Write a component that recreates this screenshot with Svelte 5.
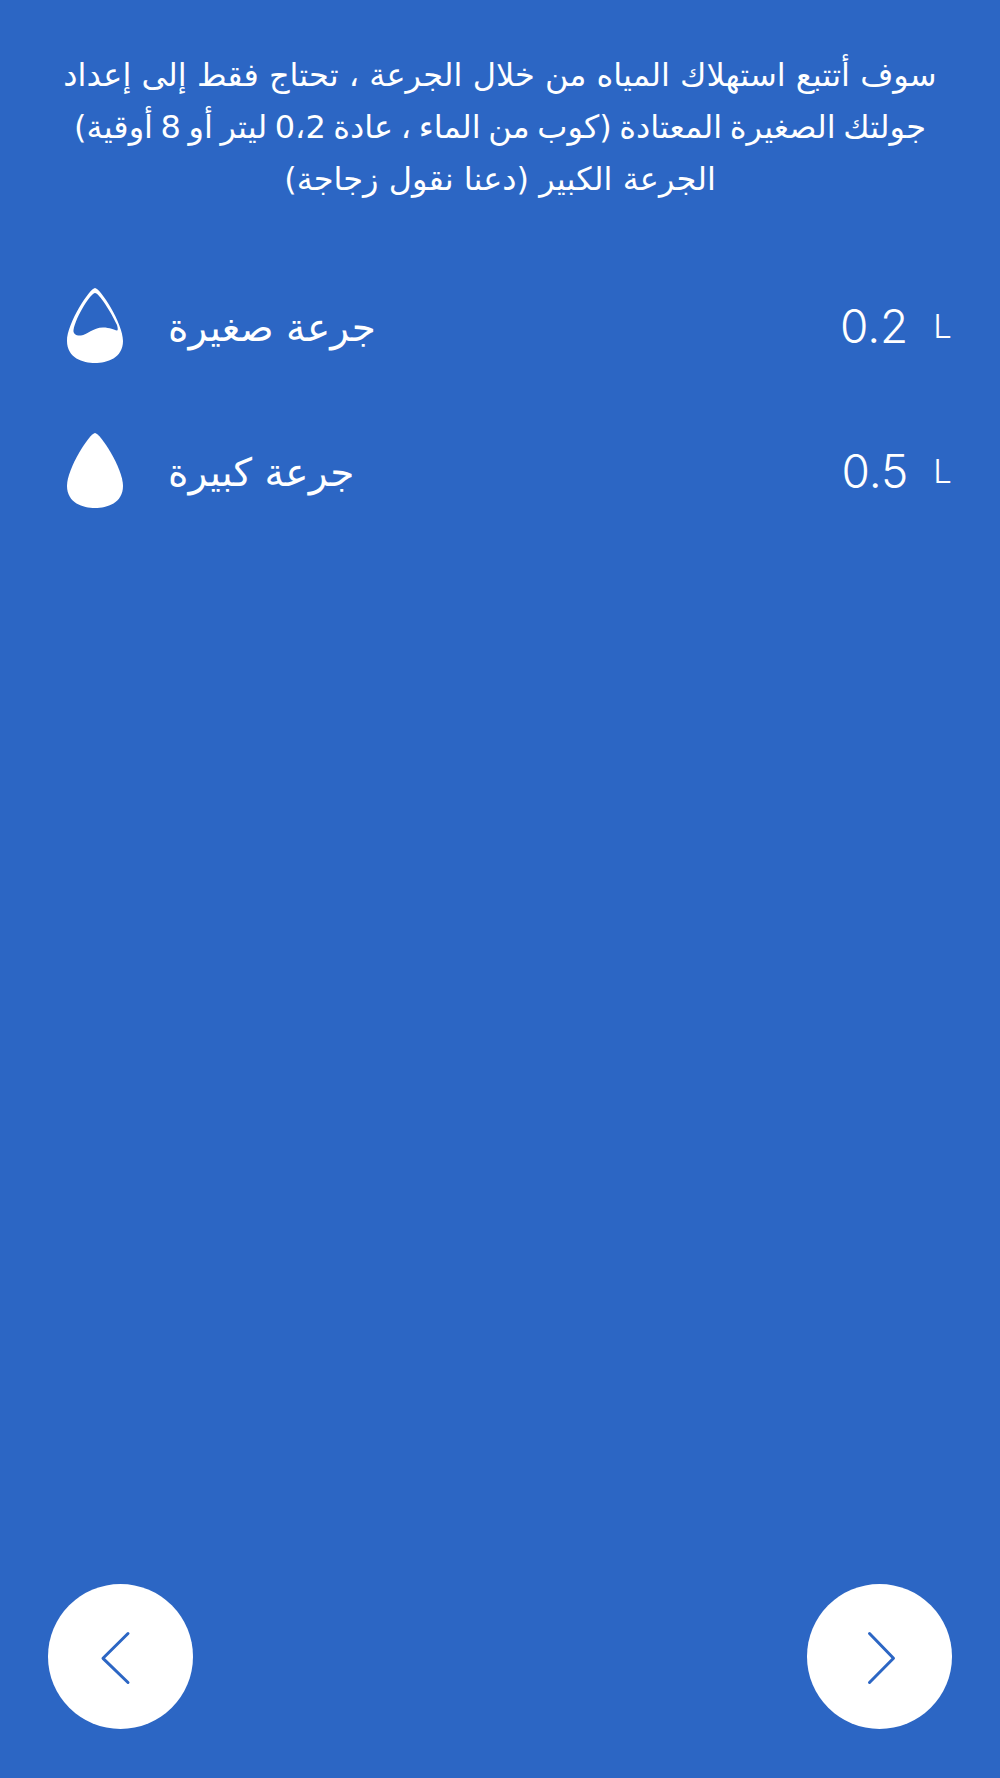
<script>
  const rows = [
    { label: 'جرعة صغيرة', value: '0.2', full: false },
    { label: 'جرعة كبيرة', value: '0.5', full: true }
  ];
  const outer = 'M28 0C33 0 56 35 56 53C56 70 40 75 28 75C16 75 0 70 0 53C0 35 23 0 28 0Z';
  const hollow = 'M28 5C24 5 9 28 6.5 42C6 45.5 9 48 14 47.5C20 47 26 39.5 36 39.5C43 39.5 47 42 50 42.5C51.5 42.7 50.5 38 49.5 36C44 24 32 5 28 5Z';
</script>

<main class="page">
  <p class="intro" lang="ar" dir="rtl">
    سوف أتتبع استهلاك المياه من خلال الجرعة ، تحتاج فقط إلى إعداد<br />
    <span class="tight">جولتك الصغيرة المعتادة (كوب من الماء ، عادة 0،2 ليتر أو 8 أوقية)</span><br />
    الجرعة الكبير (دعنا نقول زجاجة)
  </p>

  <ul class="rows">
    {#each rows as row}
      <li class="row">
        <svg class="drop" viewBox="0 0 56 75" aria-hidden="true">
          <path fill="#fff" fill-rule="evenodd" d={row.full ? outer : outer + hollow} />
        </svg>
        <span class="label" lang="ar" dir="rtl">{row.label}</span>
        <span class="value">{row.value}</span>
        <span class="unit">L</span>
      </li>
    {/each}
  </ul>

  <nav class="nav">
    <button class="round" aria-label="السابق">
      <svg viewBox="0 0 145 145" class="chev"><path d="M80 49.500 55 74.300 80 98.500" /></svg>
    </button>
    <button class="round" aria-label="التالي">
      <svg viewBox="0 0 145 145" class="chev"><path d="M62.500 49.500 86.500 74.300 62.500 98.500" /></svg>
    </button>
  </nav>
</main>

<style>
  :global(body) {
    margin: 0;
    background: #2c66c4;
  }
  .page {
    box-sizing: border-box;
    height: 1778px;
    padding: 49px 48px 49px;
    display: flex;
    flex-direction: column;
    color: #fff;
    font-family: "DejaVu Sans", "Noto Sans", sans-serif;
  }
  .intro {
    margin: 0;
    font-size: 32px;
    line-height: 52px;
    text-align: center;
    white-space: nowrap;
  }
  .tight {
    word-spacing: -2.600px;
  }
  .rows {
    list-style: none;
    margin: 83px 0 0;
    padding: 0;
    display: flex;
    flex-direction: column;
    gap: 70px;
  }
  .row {
    height: 75px;
    display: flex;
    align-items: center;
    padding-left: 19px;
  }
  .drop {
    width: 56px;
    height: 75px;
    flex: none;
  }
  .label {
    margin-left: 45px;
    margin-right: auto;
    font-size: 39px;
    padding-top: 4px;
  }
  .value {
    font-family: Inter, sans-serif;
    font-weight: 300;
    font-size: 46px;
    margin-right: 25px;
  }
  .unit {
    font-family: Inter, sans-serif;
    font-weight: 300;
    font-size: 33px;
  }
  .nav {
    margin-top: auto;
    display: flex;
    justify-content: space-between;
  }
  .round {
    width: 145px;
    height: 145px;
    border: 0;
    padding: 0;
    border-radius: 50%;
    background: #fff;
  }
  .chev {
    display: block;
    width: 145px;
    height: 145px;
  }
  .chev path {
    fill: none;
    stroke: #2c66c4;
    stroke-width: 3;
    stroke-linecap: round;
    stroke-linejoin: round;
  }
</style>
